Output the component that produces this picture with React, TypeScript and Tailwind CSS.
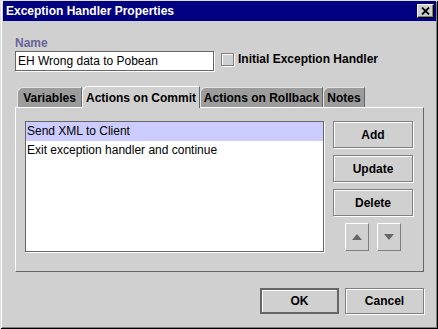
const raised =
  "border border-[#808080] shadow-[1px_1px_0_#ffffff,inset_1px_1px_0_#ffffff]";

const Tab = ({ label, width, active }: { label: string; width: string; active?: boolean }) => {
  if (active) {
    return (
      <div className={`relative z-10 -mb-px h-[22px] ${width} flex items-center justify-center bg-[#d0d0d0] border-t border-l border-white border-r border-r-[#666666] rounded-tl-[6px] text-black whitespace-nowrap`}>
        {label}
      </div>
    );
  }
  return (
    <div className={`h-[20px] ${width} flex items-center justify-center bg-[#9c9c9c] border-t border-l border-[#e4e4e4] border-r border-r-[#666666] rounded-tl-[6px] text-black whitespace-nowrap`}>
      {label}
    </div>
  );
};

const SideButton = ({ label }: { label: string }) => (
  <button className={`w-[80px] h-[27px] bg-[#d0d0d0] font-bold text-[12px] text-black ${raised}`}>
    {label}
  </button>
);

const ArrowButton = ({ up }: { up?: boolean }) => (
  <button className="w-[24px] h-[28px] bg-[#d0d0d0] flex items-center justify-center border-t border-l border-white border-r border-b border-r-[#808080] border-b-[#808080]">
    <svg width="10" height="6" viewBox="0 0 10 6">
      {up ? (
        <polygon points="0,6 10,6 5,0" fill="#666666" />
      ) : (
        <polygon points="0,0 10,0 5,6" fill="#666666" />
      )}
    </svg>
  </button>
);

export default function App() {
  return (
    <div
      className="w-[438px] h-[329px] bg-[#d0d0d0] flex flex-col pt-[1px] pl-[3px] pr-[2px] pb-[2px] shadow-[inset_1px_1px_0_#dfdfdf,inset_-1px_-1px_0_#000000,inset_2px_2px_0_#ffffff,inset_-2px_-2px_0_#808080] text-[12px] leading-[14px] text-black"
      style={{ fontFamily: '"Liberation Sans", Arial, sans-serif' }}
    >
      {/* title bar */}
      <div className="h-[20px] bg-[#000080] flex items-center justify-between pl-[3px] pr-[2px]">
        <span className="text-white font-bold text-[12px]">Exception Handler Properties</span>
        <div className="w-[17px] h-[14px] bg-[#d0d0d0] flex items-center justify-center border-t border-l border-white border-r border-b border-r-black border-b-black shadow-[inset_-1px_-1px_0_#808080]">
          <svg width="9" height="8" viewBox="0 0 9 8">
            <path d="M1 0.5 L8 7.5 M8 0.5 L1 7.5" stroke="#000" strokeWidth="1.8" />
          </svg>
        </div>
      </div>

      <div className="flex flex-col px-[12px]">
        <div className="mt-[15px] font-bold text-[#666699]">Name</div>
        <div className="mt-[1px] flex items-start">
          <div className="w-[199px] h-[20px] bg-white border border-[#666666] shadow-[1px_1px_0_#ffffff] flex items-center pl-[2px]">
            EH Wrong data to Pobean
          </div>
          <div className="ml-[7px] mt-[1px] flex items-center">
            <div className="w-[13px] h-[13px] bg-[#d0d0d0] border border-[#808080] shadow-[inset_1px_1px_0_#ffffff,1px_1px_0_#ffffff]" />
            <span className="ml-[4px] font-bold">Initial Exception Handler</span>
          </div>
        </div>

        {/* tabs */}
        <div className="mt-[15px] ml-[2px] flex items-end font-bold">
          <Tab label="Variables" width="w-[65px]" />
          <Tab label="Actions on Commit" width="w-[118px]" active />
          <Tab label="Actions on Rollback" width="w-[123px]" />
          <Tab label="Notes" width="w-[42px]" />
        </div>

        <div className="h-[165px] border-t border-l border-white border-r border-b border-r-[#666666] border-b-[#666666] flex pt-[13px] pl-[9px] pr-[9px]">
          <div className="w-[299px] h-[131px] bg-white border border-[#666666] shadow-[1px_1px_0_#ffffff] flex flex-col">
            <div className="h-[19px] leading-[19px] bg-[#ccccff] pl-[1px]">Send XML to Client</div>
            <div className="h-[19px] leading-[19px] pl-[1px]">Exit exception handler and continue</div>
          </div>
          <div className="ml-[9px] flex flex-col gap-[7px]">
            <SideButton label="Add" />
            <SideButton label="Update" />
            <SideButton label="Delete" />
            <div className="flex justify-center gap-[8px]">
              <ArrowButton up />
              <ArrowButton />
            </div>
          </div>
        </div>

        <div className="mt-[16px] flex justify-end gap-[6px]">
          <button className="w-[79px] h-[26px] bg-[#d0d0d0] font-bold text-[12px] border-2 border-[#666666] shadow-[inset_1px_1px_0_#ffffff]">
            OK
          </button>
          <button className={`w-[79px] h-[26px] bg-[#d0d0d0] font-bold text-[12px] ${raised}`}>
            Cancel
          </button>
        </div>
      </div>
    </div>
  );
}
